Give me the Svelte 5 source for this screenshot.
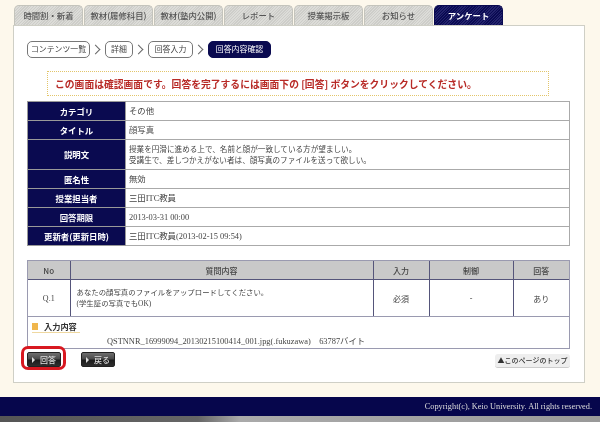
<script>
  const tabs = ['時間割・新着', '教材(履修科目)', '教材(塾内公開)', 'レポート', '授業掲示板', 'お知らせ', 'アンケート'];
  const rows = [
    ['カテゴリ', ['その他'], 'r19'],
    ['タイトル', ['顔写真'], 'r19'],
    ['説明文', ['授業を円滑に進める上で、名前と顔が一致している方が望ましい。', '受講生で、差しつかえがない者は、顔写真のファイルを送って欲しい。'], 'r30 small'],
    ['匿名性', ['無効'], 'r19'],
    ['授業担当者', ['三田ITC教員'], 'r19'],
    ['回答期限', ['2013-03-31 00:00'], 'r19'],
    ['更新者(更新日時)', ['三田ITC教員(2013-02-15 09:54)'], 'r19']
  ];
</script>

<div class="page">
  <div class="wrap">
    <nav class="tabs">
      {#each tabs as t, i}
        <div class="tab" class:on={i === 6}>{t}</div>
      {/each}
    </nav>
    <main class="panel">
      <div class="crumbs">
        <span class="pill w1">コンテンツ一覧</span><span class="sep"></span>
        <span class="pill w2">詳細</span><span class="sep"></span>
        <span class="pill w3">回答入力</span><span class="sep"></span>
        <span class="pill cur">回答内容確認</span>
      </div>
      <div class="notice">この画面は確認画面です。回答を完了するには画面下の [回答] ボタンをクリックしてください。</div>
      <table class="info">
        <colgroup><col class="c-h" /><col /></colgroup>
        <tbody>
          {#each rows as r}
            <tr class={r[2]}>
              <th>{r[0]}</th>
              <td>{#each r[1] as l}<div>{l}</div>{/each}</td>
            </tr>
          {/each}
        </tbody>
      </table>
      <div class="qbox">
        <table class="q">
          <colgroup><col class="q1" /><col /><col class="q3" /><col class="q4" /><col class="q5" /></colgroup>
          <thead>
            <tr><th>No</th><th>質問内容</th><th>入力</th><th>制御</th><th>回答</th></tr>
          </thead>
          <tbody>
            <tr>
              <td class="c">Q.1</td>
              <td class="qt"><div>あなたの顔写真のファイルをアップロードしてください。</div><div>(学生証の写真でもOK)</div></td>
              <td class="c">必須</td>
              <td class="c">-</td>
              <td class="c">あり</td>
            </tr>
          </tbody>
        </table>
        <div class="answer">
          <div class="alabel"><i></i>入力内容</div>
          <div class="afile">QSTNNR_16999094_20130215100414_001.jpg(.fukuzawa)　63787バイト</div>
        </div>
      </div>
      <div class="actions">
        <button class="btn ring"><b></b>回答</button>
        <button class="btn back"><b></b>戻る</button>
        <span class="top">▲このページのトップ</span>
      </div>
    </main>
  </div>
  <footer class="foot">Copyright(c), Keio University. All rights reserved.</footer>
  <div class="strip"></div>
</div>

<style>
  :global(body) { margin: 0; background: #fdf8ec; }
  .page {
    width: 600px; height: 422px; overflow: hidden; background: #fdf8ec;
    font-family: "Liberation Serif", "Noto Sans CJK JP", serif;
    font-size: 8.4px; color: #333; filter: blur(0.5px);
  }
  .wrap { width: 572px; margin-left: 13px; padding-top: 5px; }
  .tabs { display: flex; gap: 1px; padding-left: 1px; height: 20px; }
  .tab {
    width: 69px; height: 20px; box-sizing: border-box; text-align: center; line-height: 19px;
    font-family: "Noto Sans CJK JP", sans-serif; font-size: 8.4px; font-weight: 500; color: #555;
    border: 1px solid #c4c4bc; border-bottom: 0; border-radius: 5px 5px 0 0;
    background: repeating-linear-gradient(135deg, #dcdcd8 0 1px, #cdcdc9 1px 2px);
    white-space: nowrap; overflow: hidden;
  }
  .tab.on {
    color: #fff; font-weight: 700; border-color: #0a0a50;
    background: repeating-linear-gradient(135deg, #0a0a52 0 1px, #23236c 1px 2px);
  }
  .panel {
    box-sizing: border-box; height: 358px; background: #fff;
    border: 1px solid #cfcfc6; padding: 15px 14px 0 13px;
  }
  .crumbs { display: flex; align-items: center; height: 17px; }
  .pill {
    box-sizing: border-box; height: 17px; line-height: 14px; text-align: center;
    border: 1px solid #777; border-radius: 5px; background: #fff; color: #444;
    font-family: "Noto Sans CJK JP", sans-serif; font-size: 7.9px; white-space: nowrap;
  }
  .w1 { width: 63px; } .w2 { width: 28px; } .w3 { width: 45px; }
  .cur { width: 63px; background: #0a0a50; border-color: #0a0a50; color: #fff; }
  .sep { width: 15px; height: 17px; position: relative; }
  .sep::after {
    content: ""; position: absolute; left: 2px; top: 5px; width: 6px; height: 6px;
    border-top: 1px solid #666; border-right: 1px solid #666; transform: rotate(45deg);
  }
  .notice {
    box-sizing: border-box; margin: 13px 21px 0 20px; height: 25px; line-height: 24px; padding-left: 7px;
    border: 1px dotted #e2c56a; color: #b82a26; white-space: nowrap; overflow: hidden;
    font-family: "Noto Sans CJK JP", sans-serif; font-size: 9.8px; font-weight: 700;
  }
  table { border-collapse: collapse; width: 543px; table-layout: fixed; }
  .info { margin-top: 5px; }
  .c-h { width: 98px; }
  .info th, .info td { padding: 0; border: 1px solid #aaa; }
  .info th {
    background: #0a0a50; color: #fff; font-family: "Noto Sans CJK JP", sans-serif; padding-bottom: 1px;
    font-size: 8.4px; font-weight: 700; text-align: center; border-color: #999; white-space: nowrap;
  }
  .info td { padding: 1px 0 0 3px; line-height: 11.5px; color: #444; }
  .small td { font-size: 7.6px; }
  .r19 { height: 19px; } .r30 { height: 30px; }
  .qbox { margin-top: 14px; width: 543px; border: 1px solid #9a9ab0; box-sizing: border-box; }
  .q { width: 541px; }
  .q1 { width: 42px; } .q3 { width: 56px; } .q4 { width: 84px; } .q5 { width: 56px; }
  .q th, .q td { border: 1px solid #55557a; padding: 0; border-top: 0; }
  .q th:first-child, .q td:first-child { border-left: 0; }
  .q th:last-child, .q td:last-child { border-right: 0; border-left-color: #8a8aa0; }
  .q th { height: 18px; background: #c9c9c9; font-weight: 500; font-family: "Noto Sans CJK JP", sans-serif; font-size: 8px; color: #444; }
  .q td { height: 36px; border-bottom-color: #9a9ab0; font-size: 8px; color: #444; }
  .c { text-align: center; }
  .q td.qt { padding-left: 6px; line-height: 11.5px; font-size: 7.4px; }
  .answer { height: 31px; }
  .alabel {
    display: inline-flex; align-items: center; margin: 3px 0 0 4px; width: 48px; height: 12px; border-bottom: 1px solid #efd8a0;
    font-family: "Noto Sans CJK JP", sans-serif; font-size: 8.2px; font-weight: 700; color: #333; white-space: nowrap;
  }
  .alabel i { width: 6px; height: 7px; background: #f0b64c; margin-right: 6px; flex: none; }
  .afile { padding-left: 79px; margin-top: 3px; line-height: 11px; white-space: nowrap; font-size: 8.4px; color: #444; }
  .actions { position: relative; display: flex; margin-top: 3px; gap: 20px; padding-left: 0; height: 16px; align-items: flex-start; }
  .btn {
    box-sizing: border-box; width: 34px; height: 15px; padding: 0 0 0 8px; border: 1px solid #222; border-radius: 2px;
    background: linear-gradient(#6e6e6e, #4a4a4a 45%, #1c1c1c 55%, #2e2e2e);
    color: #ddd; font: 500 8px/12px "Noto Sans CJK JP", sans-serif; position: relative; white-space: nowrap;
  }
  .btn b {
    position: absolute; left: 4px; top: 4px; width: 0; height: 0;
    border-left: 3px solid #ddd; border-top: 3px solid transparent; border-bottom: 3px solid transparent;
  }
  .ring::after {
    content: ""; position: absolute; left: -7px; top: -7px; width: 45px; height: 24px; box-sizing: border-box;
    border: 3px solid #d81820; border-radius: 7px;
  }
  .top {
    position: absolute; right: 0; top: 2px; width: 75px; height: 14px; box-sizing: border-box; text-align: center;
    background: #eeeeee; border-radius: 3px; line-height: 13px; white-space: nowrap;
    font-family: "Noto Sans CJK JP", sans-serif; font-size: 7px; font-weight: 500; color: #333;
    border-bottom: 1px solid #ccc;
  }
  .foot {
    margin-top: 14px; height: 19px; background: #06064c; color: #ddd; box-sizing: border-box;
    text-align: right; padding-right: 8px; line-height: 19px; font-size: 8.3px;
  }
  .strip { height: 6px; background: linear-gradient(90deg, #555, #666 33%, #aaa 40%, #999); }
</style>
